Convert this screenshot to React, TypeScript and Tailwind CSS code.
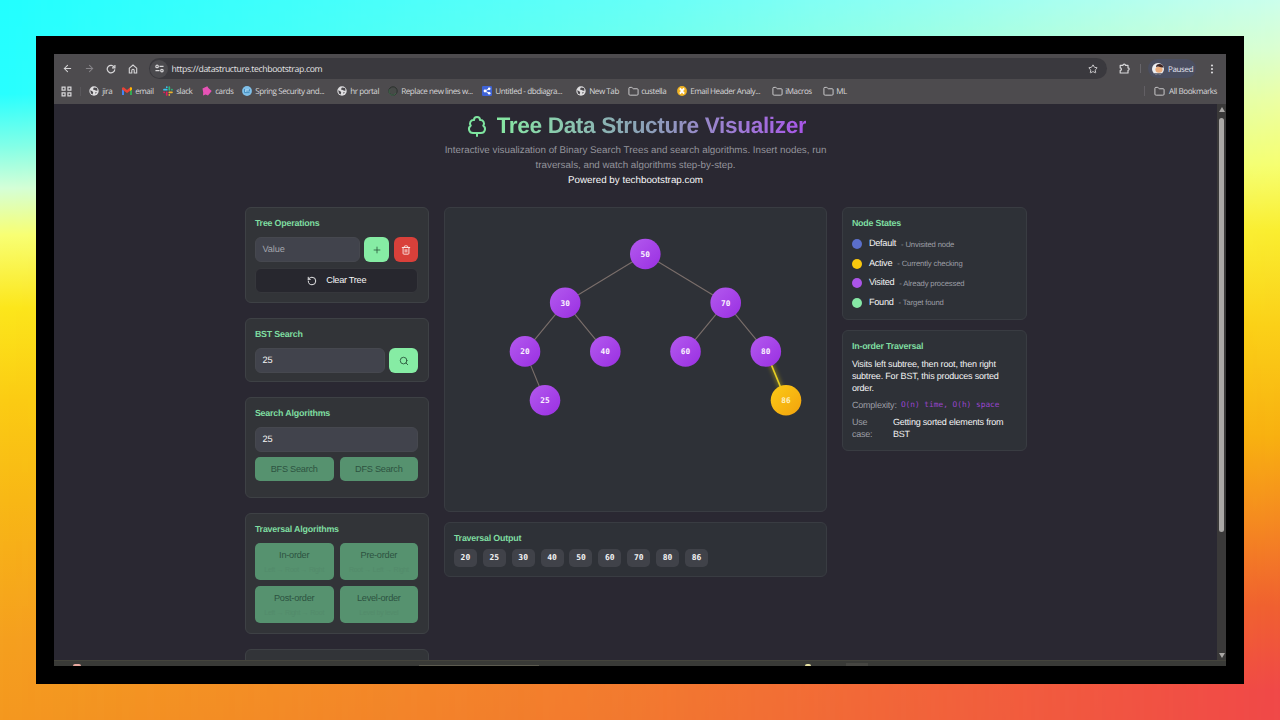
import type { ReactNode } from "react";
import {
  ArrowLeft,
  ArrowRight,
  EllipsisVertical,
  Folder,
  Plus,
  RotateCcw,
  Search,
  Star,
  Trash2,
  TreeDeciduous,
} from "lucide-react";

type TreeNode = { value: number; x: number; y: number; active?: boolean };

const NODES: TreeNode[] = [
  { value: 50, x: 200.3, y: 46 },
  { value: 30, x: 120.2, y: 94.7 },
  { value: 70, x: 280.7, y: 94.7 },
  { value: 20, x: 80, y: 143.4 },
  { value: 40, x: 160.3, y: 143.4 },
  { value: 60, x: 240.5, y: 143.4 },
  { value: 80, x: 320.8, y: 143.4 },
  { value: 25, x: 100, y: 192.3 },
  { value: 86, x: 341, y: 192.3, active: true },
];

const EDGES = [
  [50, 30],
  [50, 70],
  [30, 20],
  [30, 40],
  [70, 60],
  [70, 80],
  [20, 25],
];

const OUTPUT = [20, 25, 30, 40, 50, 60, 70, 80, 86];

const STATES = [
  { name: "Default", note: "Unvisited node", dot: "bg-[#5b6fcb]" },
  { name: "Active", note: "Currently checking", dot: "bg-[#f9c80e]" },
  { name: "Visited", note: "Already processed", dot: "bg-[#ab55e8]" },
  { name: "Found", note: "Target found", dot: "bg-[#86e8a5]" },
];

const nodeOf = (value: number) => NODES.find((n) => n.value === value)!;

const GlobeIcon = () => (
  <svg viewBox="0 0 10 10" className="size-[10px]">
    <circle cx="5" cy="5" r="4.7" fill="#dedddf" />
    <path d="M1.2 4.2 3.4 5.2 4.2 6.4 3.6 8.6 2 7.4ZM5 1.4 8 2 8.6 4.4 7.2 4.8 5.6 4 4 3.6 4.4 2.2ZM6.4 6 7.8 6.2 6.6 8Z" fill="#49474b" />
  </svg>
);

const FolderIcon = () => <Folder className="size-[11px] text-[#d4d3d5]" strokeWidth={2} />;

const GmailIcon = () => (
  <svg viewBox="0 0 10 8" className="w-[10px] h-2">
    <path d="M0 1h2v7H.6Q0 8 0 7.4Z" fill="#4285f4" />
    <path d="M8 1h2v6.4q0 .6-.6.6H8Z" fill="#34a853" />
    <path d="M0 1Q1-.2 2 .6L5 3 8 .6Q9-.2 10 1v1.4L5 6 0 2.4Z" fill="#ea4335" />
    <path d="M8 .6Q9.4-.2 10 1v1.4L8 4Z" fill="#fbbc04" />
  </svg>
);

const SlackIcon = () => (
  <svg viewBox="0 0 10 10" className="size-[10px]" strokeWidth="1.7" strokeLinecap="round">
    <path d="M1 3.7h2.8M3.8 1v.2" stroke="#36c5f0" />
    <path d="M6.3 1v2.8M9 3.7h-.2" stroke="#2eb67d" />
    <path d="M9 6.3H6.3M6.3 9v-.2" stroke="#ecb22e" />
    <path d="M3.7 9V6.3M1 6.3h.2" stroke="#e01e5a" />
  </svg>
);

const CardsIcon = () => (
  <svg viewBox="0 0 10 10" className="size-[10px]">
    <path d="M.5 2.4 5.3.3 6.4 2 9.7 5 6 9.4 3.6 8.6 1 9.6 1.2 6.6Z" fill="#e653b5" />
  </svg>
);

const SpringIcon = () => (
  <svg viewBox="0 0 10 10" className="size-[10px]">
    <circle cx="5" cy="5" r="4.9" fill="#7fbfe8" />
    <path d="M3 3.4h4v3.2H3Z" fill="#a9d6f3" />
    <path d="M2.6 3v3.6h4.9M4.2 5.1h3.2V3.2" stroke="#2f7fb4" strokeWidth=".8" fill="none" />
  </svg>
);

const ReplaceIcon = () => (
  <svg viewBox="0 0 10 10" className="size-[10px]">
    <circle cx="5" cy="5" r="4.2" fill="#474a48" stroke="#2b312d" strokeWidth="1" />
    <path d="M2 3.2A3.6 3.6 0 1 0 8 7" stroke="#3f6b4c" strokeWidth=".9" fill="none" />
  </svg>
);

const DiagramIcon = () => (
  <svg viewBox="0 0 10 10" className="size-[10px]">
    <rect width="10" height="10" rx="1.2" fill="#3f63d6" />
    <path d="M7 2.8 3 5l4 2.2" stroke="#fff" strokeWidth=".9" fill="none" />
    <circle cx="3" cy="5" r="1.4" fill="#fff" />
    <circle cx="7.2" cy="2.8" r="1.3" fill="#fff" />
    <circle cx="7.2" cy="7.2" r="1.3" fill="#fff" />
  </svg>
);

const MailHeaderIcon = () => (
  <svg viewBox="0 0 10 10" className="size-[10px]">
    <circle cx="5" cy="5" r="4.9" fill="#f0b323" />
    <path d="M2.9 2.4 7.1 7.6M7.1 2.4 2.9 7.6" stroke="#fff" strokeWidth="1.8" />
  </svg>
);

const BOOKMARKS: { label: string; icon: ReactNode; width: string }[] = [
  { label: "jira", icon: <GlobeIcon />, width: "w-[33px]" },
  { label: "email", icon: <GmailIcon />, width: "w-[41px]" },
  { label: "slack", icon: <SlackIcon />, width: "w-[39px]" },
  { label: "cards", icon: <CardsIcon />, width: "w-[40px]" },
  { label: "Spring Security and...", icon: <SpringIcon />, width: "w-[95px]" },
  { label: "hr portal", icon: <GlobeIcon />, width: "w-[51px]" },
  { label: "Replace new lines w...", icon: <ReplaceIcon />, width: "w-[94px]" },
  { label: "Untitled - dbdiagra...", icon: <DiagramIcon />, width: "w-[94px]" },
  { label: "New Tab", icon: <GlobeIcon />, width: "w-[52px]" },
  { label: "custella", icon: <FolderIcon />, width: "w-[49px]" },
  { label: "Email Header Analy...", icon: <MailHeaderIcon />, width: "w-[95px]" },
  { label: "iMacros", icon: <FolderIcon />, width: "w-[51px]" },
  { label: "ML", icon: <FolderIcon />, width: "w-[40px]" },
];

const Toolbar = () => (
  <div className="h-[29px] flex items-center text-[#d8d7d9]">
    <div className="flex items-center pl-[8px]">
      <ArrowLeft className="size-[11px]" strokeWidth={2.2} />
      <ArrowRight className="size-[11px] ml-[11px] text-[#88868a]" strokeWidth={2.2} />
      <svg viewBox="0 0 10 10" className="size-[10px] ml-[11px]" fill="none" stroke="currentColor" strokeWidth="1.2">
        <path d="M8.3 3.2A3.8 3.8 0 1 0 8.8 5.4" />
        <path d="M8.9 1v2.8H6" />
      </svg>
      <svg viewBox="0 0 10 10" className="size-[10px] ml-[12px]" fill="none" stroke="currentColor" strokeWidth="1.1">
        <path d="M1.3 9V4.2L5 1l3.7 3.2V9H6.2V6.4a1.2 1.2 0 0 0-2.4 0V9Z" />
      </svg>
    </div>
    <div className="ml-[11px] w-[958px] h-[21px] rounded-full bg-[#3a393e] flex items-center">
      <div className="size-[18px] ml-[1px] rounded-full bg-[#4b4a4e] flex items-center justify-center">
        <svg viewBox="0 0 10 10" className="size-[9px]" fill="none" stroke="currentColor" strokeWidth="1.3">
          <circle cx="2.3" cy="2.7" r="1.4" />
          <path d="M5 2.7h4.5M.5 7.3H5" />
          <circle cx="7.7" cy="7.3" r="1.4" />
        </svg>
      </div>
      <span className="ml-[3.5px] pt-[2px] text-[8.7px] tracking-[-0.34px] text-[#e6e5e7] whitespace-nowrap">
        https://datastructure.techbootstrap.com
      </span>
      <Star className="size-[10px] ml-auto mr-[9px]" strokeWidth={2.2} />
    </div>
    <svg viewBox="0 0 11 11" className="size-[11px] ml-[12px]" fill="none" stroke="currentColor" strokeWidth="1.2" strokeLinejoin="round">
      <path d="M1.2 2.3H4a1.2 1.2 0 0 1 2.4 0H9v2.6a1.2 1.2 0 0 1 0 2.4V10H1.2V7.4a1.2 1.2 0 0 0 0-2.5Z" />
    </svg>
    <div className="w-px h-[9px] ml-[10px] bg-[#67656a]" />
    <div className="ml-[7px] w-[48px] h-[19px] rounded-full bg-[#4a4e60] flex items-center pl-[4px]">
      <svg viewBox="0 0 12 12" className="size-[12px]">
        <defs>
          <clipPath id="avatar">
            <circle cx="6" cy="6" r="6" />
          </clipPath>
        </defs>
        <g clipPath="url(#avatar)">
          <rect width="12" height="12" fill="#eceef2" />
          <path d="M0 10.2h12v2H0Z" fill="#4a4e60" />
          <ellipse cx="7" cy="6.6" rx="3.6" ry="3.2" fill="#e9ab7c" />
          <path d="M4 4Q4 1 7.5 1t4.4 3.4L10 4.6 6 3.6Z" fill="#3c2424" />
        </g>
      </svg>
      <span className="ml-[4px] pt-[2px] text-[8px] tracking-[-0.35px] text-[#e3e5f0]">Paused</span>
    </div>
    <EllipsisVertical className="size-[12px] ml-[10px]" strokeWidth={2.4} />
  </div>
);

const BookmarkBar = () => (
  <div className="h-[21px] flex items-start pt-[1px] text-[8.1px] tracking-[-0.46px] text-[#d8d7d9]">
    <div className="h-[14px] w-full flex items-center">
      <svg viewBox="0 0 10 10" className="size-[11px] ml-[7px]" fill="none" stroke="currentColor" strokeWidth="1.1">
        <path d="M1 1h2.7v2.7H1ZM6.3 1H9v2.7H6.3ZM1 6.3h2.7V9H1ZM6.3 6.3H9V9H6.3Z" />
      </svg>
      <div className="w-px h-[9px] ml-[8px] mr-[8px] bg-[#59575b]" />
      {BOOKMARKS.map((b) => (
        <div key={b.label} className={`${b.width} shrink-0 flex items-center`}>
          <span className="w-[13.2px] shrink-0 flex items-center">{b.icon}</span>
          <span className="pt-[2px] whitespace-nowrap">{b.label}</span>
        </div>
      ))}
      <div className="ml-auto w-px h-[10px] bg-[#625f64]" />
      <div className="ml-[9px] mr-[9px] flex items-center">
        <FolderIcon />
        <span className="ml-[4px] pt-[2px] tracking-[-0.46px] whitespace-nowrap">All Bookmarks</span>
      </div>
    </div>
  </div>
);

const Card = ({ className = "", children }: { className?: string; children?: ReactNode }) => (
  <div className={`rounded-[6px] border px-[9.4px] ${className}`}>{children}</div>
);

const CardTitle = ({ children }: { children: ReactNode }) => (
  <h3 className="text-[8.9px] tracking-[-0.2px] leading-[12px] font-bold text-[#7fdda0]">{children}</h3>
);

const Field = ({ value, placeholder, className = "" }: { value?: string; placeholder?: string; className?: string }) => (
  <div
    className={`h-[25px] rounded-[6px] bg-[#41434c] border border-[#46484f] flex items-center px-[6.5px] text-[9.2px] tracking-[-0.1px] ${
      value ? "text-[#f4f4f5]" : "text-[#a3a5ad]"
    } ${className}`}
  >
    {value ?? placeholder}
  </div>
);

const AlgoButton = ({ label, note, className = "" }: { label: string; note?: string; className?: string }) => (
  <button className={`rounded-[5px] bg-[#56926f] text-[9.2px] tracking-[-0.25px] leading-[12px] text-[#2d5341] flex flex-col items-center ${className}`}>
    <span>{label}</span>
    {note && <span className="mt-[4px] text-[7px] leading-[9px] text-[#538b6b] whitespace-nowrap">{note}</span>}
  </button>
);

const Controls = () => (
  <div className="w-[184px] flex flex-col gap-[15px]">
    <Card className="h-[96px] pt-[9px] bg-[#323438] border-[#3e4145]">
      <CardTitle>Tree Operations</CardTitle>
      <div className="mt-[8px] flex justify-between">
        <Field placeholder="Value" className="w-[105px]" />
        <button className="w-[25px] h-[25px] rounded-[6px] bg-[#86eca4] text-[#2c5a3d] flex items-center justify-center">
          <Plus className="size-[10px]" strokeWidth={2} />
        </button>
        <button className="w-[24.5px] h-[25px] rounded-[6px] bg-[#d9403a] text-[#fbe9e7] flex items-center justify-center">
          <Trash2 className="size-[10px]" strokeWidth={2.2} />
        </button>
      </div>
      <button className="mt-[6px] w-full h-[25px] rounded-[6px] bg-[#27272e] border border-[#36373c] flex items-center justify-center text-[9.2px] tracking-[-0.3px] text-[#f4f4f5]">
        <RotateCcw className="size-[10px] mr-[9.5px]" strokeWidth={2.2} />
        Clear Tree
      </button>
    </Card>

    <Card className="h-[64px] pt-[9px] bg-[#323438] border-[#3e4145]">
      <CardTitle>BST Search</CardTitle>
      <div className="mt-[8px] flex justify-between">
        <Field value="25" className="w-[130px]" />
        <button className="w-[29px] h-[25px] rounded-[6px] bg-[#86eca4] text-[#2c5a3d] flex items-center justify-center">
          <Search className="size-[10px]" strokeWidth={2.2} />
        </button>
      </div>
    </Card>

    <Card className="h-[101px] pt-[9px] bg-[#323438] border-[#3e4145]">
      <CardTitle>Search Algorithms</CardTitle>
      <Field value="25" className="mt-[8px]" />
      <div className="mt-[5px] grid grid-cols-2 gap-[6px]">
        <AlgoButton label="BFS Search" className="h-[24px] justify-center" />
        <AlgoButton label="DFS Search" className="h-[24px] justify-center" />
      </div>
    </Card>

    <Card className="h-[121px] pt-[9px] bg-[#323438] border-[#3e4145]">
      <CardTitle>Traversal Algorithms</CardTitle>
      <div className="mt-[8px] grid grid-cols-2 gap-[6px]">
        <AlgoButton label="In-order" note="Left → Root → Right" className="h-[37px] pt-[6px]" />
        <AlgoButton label="Pre-order" note="Root → Left → Right" className="h-[37px] pt-[6px]" />
        <AlgoButton label="Post-order" note="Left → Right → Root" className="h-[37px] pt-[6px]" />
        <AlgoButton label="Level-order" note="Level by level" className="h-[37px] pt-[6px]" />
      </div>
    </Card>

    <Card className="h-[60px] bg-[#323438] border-[#3e4145]" />
  </div>
);

const TreeCanvas = () => (
  <svg viewBox="0 0 381 303" className="w-[381px] h-[303px]">
    <defs>
      <linearGradient id="visited" x1="0" y1="0" x2="1" y2="1">
        <stop offset="0" stopColor="#b35aee" />
        <stop offset="1" stopColor="#9a2fe2" />
      </linearGradient>
      <linearGradient id="active" x1="0" y1="0" x2="1" y2="1">
        <stop offset="0" stopColor="#fccb16" />
        <stop offset="1" stopColor="#f2a20d" />
      </linearGradient>
      <filter id="glow" x="-200%" y="-50%" width="500%" height="200%">
        <feGaussianBlur stdDeviation="2.2" />
      </filter>
    </defs>
    {EDGES.map(([from, to]) => (
      <line
        key={`${from}-${to}`}
        x1={nodeOf(from).x}
        y1={nodeOf(from).y}
        x2={nodeOf(to).x}
        y2={nodeOf(to).y}
        stroke="#7b6f6b"
        strokeWidth="1.1"
      />
    ))}
    <line x1="320.8" y1="143.4" x2="341" y2="192.3" stroke="#d9c41a" strokeOpacity=".5" strokeWidth="3.5" filter="url(#glow)" />
    <line x1="320.8" y1="143.4" x2="341" y2="192.3" stroke="#e8d022" strokeWidth="1.6" />
    {NODES.map((n) => (
      <g key={n.value}>
        <circle cx={n.x} cy={n.y} r="15.3" fill={n.active ? "url(#active)" : "url(#visited)"} />
        <text
          x={n.x}
          y={n.y + 2.9}
          textAnchor="middle"
          fill={n.active ? "#fdf0c4" : "#fbf4ff"}
          className="font-['DejaVu_Sans_Mono',monospace] font-bold text-[7.8px]"
        >
          {n.value}
        </text>
      </g>
    ))}
  </svg>
);

const Legend = () => (
  <div className="w-[185px] flex flex-col gap-[10px]">
    <Card className="h-[113px] pt-[9px] bg-[#2e3137] border-[#393c42]">
      <CardTitle>Node States</CardTitle>
      <div className="mt-[5.5px]">
        {STATES.map((s) => (
          <div key={s.name} className="h-[19.5px] flex items-center">
            <span className={`size-[10px] rounded-full ${s.dot}`} />
            <span className="ml-[7px] text-[9.2px] tracking-[-0.28px] text-[#f4f4f5]">{s.name}</span>
            <span className="ml-[5px] pt-px text-[7.7px] tracking-[-0.15px] text-[#9c9ea5]">- {s.note}</span>
          </div>
        ))}
      </div>
    </Card>

    <Card className="h-[121px] pt-[9px] bg-[#2e3137] border-[#393c42]">
      <CardTitle>In-order Traversal</CardTitle>
      <p className="mt-[5.5px] text-[9px] tracking-[-0.18px] leading-[12.1px] text-[#f4f4f5] whitespace-nowrap">
        Visits left subtree, then root, then right
        <br />
        subtree. For BST, this produces sorted
        <br />
        order.
      </p>
      <div className="mt-[5px] flex text-[9px] tracking-[-0.2px] leading-[12px] text-[#9c9ea5]">
        <span className="w-[49px]">Complexity:</span>
        <span className="font-['DejaVu_Sans_Mono',monospace] text-[7.8px] tracking-normal text-[#9a45cf] whitespace-nowrap">
          O(n) time, O(h) space
        </span>
      </div>
      <div className="mt-[5px] flex text-[9px] tracking-[-0.2px] leading-[12px] text-[#9c9ea5]">
        <span className="w-[41px]">
          Use
          <br />
          case:
        </span>
        <span className="text-[#f4f4f5] whitespace-nowrap">
          Getting sorted elements from
          <br />
          BST
        </span>
      </div>
    </Card>
  </div>
);

const Page = () => (
  <div className="flex-1 h-full overflow-hidden bg-[#2a2832] font-['Liberation_Sans',Arial,sans-serif]">
    <header className="h-[103px] pt-[8px] flex flex-col items-center">
      <div className="h-[28px] flex items-center">
        <TreeDeciduous className="size-[24px] mr-[8px] text-[#7fe5a0]" strokeWidth={2} />
        <h1 className="text-[22.6px] tracking-[-0.33px] leading-[28px] font-bold bg-gradient-to-r from-[#86e8a2] via-[#8c9db8] to-[#a855e8] bg-clip-text text-transparent whitespace-nowrap">
          Tree Data Structure Visualizer
        </h1>
      </div>
      <p className="mt-[4px] text-center text-[9.8px] leading-[14.9px] text-[#94949c] whitespace-nowrap">
        Interactive visualization of Binary Search Trees and search algorithms. Insert nodes, run
        <br />
        traversals, and watch algorithms step-by-step.
        <br />
        <span className="text-[#f7f7f8]">Powered by techbootstrap.com</span>
      </p>
    </header>
    <main className="w-[782px] mx-auto flex gap-[15px]">
      <Controls />
      <div className="w-[383px] flex flex-col gap-[10px]">
        <div className="h-[305px] rounded-[6px] border border-[#393c42] bg-[#2e3137]">
          <TreeCanvas />
        </div>
        <Card className="h-[55px] pt-[9px] bg-[#2e3137] border-[#393c42]">
          <CardTitle>Traversal Output</CardTitle>
          <div className="mt-[5px] flex gap-[5.9px]">
            {OUTPUT.map((v) => (
              <span
                key={v}
                className="w-[23px] h-[18px] rounded-[5px] bg-[#404249] text-[#f4f4f5] font-['DejaVu_Sans_Mono',monospace] font-bold text-[8px] flex items-center justify-center"
              >
                {v}
              </span>
            ))}
          </div>
        </Card>
      </div>
      <Legend />
    </main>
  </div>
);

const Scrollbar = () => (
  <div className="w-[9px] h-full bg-[#3a3939] flex flex-col items-center">
    <svg viewBox="0 0 6 5" className="w-[6px] h-[5px] mt-[3px]">
      <path d="M3 0 6 5H0Z" fill="#aaa8a6" />
    </svg>
    <div className="mt-[6px] w-[5px] h-[414px] rounded-full bg-[#aaa8a6]" />
    <svg viewBox="0 0 6 5" className="w-[6px] h-[5px] mt-auto mb-[2px]">
      <path d="M0 0H6L3 5Z" fill="#aaa8a6" />
    </svg>
  </div>
);

// sliver of the desktop taskbar under the browser window
const Taskbar = () => (
  <div className="h-[6px] bg-[#393a37] border-t border-[#44443c] flex items-end overflow-hidden">
    <div className="ml-[19px] w-[8px] h-[2px] rounded-t-full bg-[#e8a9a0]" />
    <div className="ml-[338px] w-[120px] h-px bg-[#5c5b50]" />
    <div className="ml-[266px] w-[6px] h-[2px] rounded-t-full bg-[#e9e3a4]" />
    <div className="ml-[35px] w-[22px] h-[3px] bg-[#464642]" />
  </div>
);

// two vertical ramps, the second one fading in towards the right edge
const Backdrop = () => (
  <div className="[grid-area:1/1] bg-[linear-gradient(180deg,#22ffff_0px,#28ffff_94px,#80ffe8_145px,#d4ffd8_188px,#f8ff74_235px,#fce61c_308px,#fbcc14_400px,#f8b816_500px,#f5a01f_640px,#f4981f_720px)]">
    <div className="w-full h-full bg-[linear-gradient(180deg,#ccffec_0px,#dcffd0_50px,#ecffa4_100px,#f6ff70_165px,#faee30_230px,#fbd018_325px,#f8b010_436px,#f58a20_519px,#f06030_605px,#f04848_690px)] [mask-image:linear-gradient(90deg,transparent_0%,rgba(0,0,0,0.4)_50%,black_100%)]" />
  </div>
);

const App = () => {
  return (
    <div className="w-[1280px] h-[720px] grid overflow-hidden [text-rendering:geometricPrecision]">
      <Backdrop />
      <div className="[grid-area:1/1] z-10 m-9 w-[1208px] h-[648px] bg-black p-[18px]">
        <div className="w-full h-full flex flex-col bg-[#4d4b4e] font-['Open_Sans','Noto_Sans',sans-serif]">
          <Toolbar />
          <BookmarkBar />
          <div className="flex-1 min-h-0 flex">
            <Page />
            <Scrollbar />
          </div>
          <Taskbar />
        </div>
      </div>
    </div>
  );
};

export default App;
